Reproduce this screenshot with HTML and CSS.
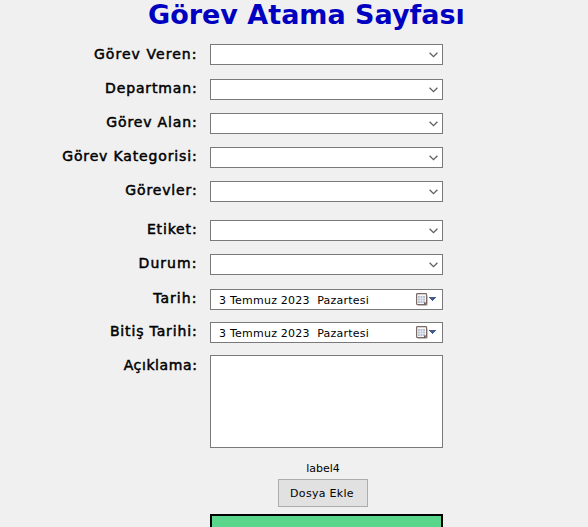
FILE: index.html
```html
<!DOCTYPE html>
<html lang="tr">
<head>
<meta charset="utf-8">
<title>Görev Atama Sayfası</title>
<link rel="stylesheet" href="styles.css">
</head>
<body>
<svg class="defs" width="0" height="0" aria-hidden="true">
  <symbol id="chevron" viewBox="0 0 9 6"><path d="M.6 .8 4.5 4.6 8.4 .8" fill="none" stroke="#606060" stroke-width="1.3"/></symbol>
  <symbol id="calendar" viewBox="0 0 22 14">
    <path d="M2 12.5h9.5V3" fill="none" stroke="#d8d8d8"/>
    <rect x=".6" y=".6" width="10" height="11" rx=".8" fill="#f4f8fb" stroke="#7a6965" stroke-width="1.2"/>
    <path d="M2 3h7v7H2z" fill="#b4bfcc"/>
    <path d="M2 5.3h7M2 7.6h7M4.3 3v7M6.7 3v7" stroke="#f0f5fa" stroke-width=".7"/>
    <path d="M8 12V9.5h3z" fill="#6c5956"/>
    <path d="M13 4h7v1h-1v1h-1v1h-1v1h-1V7h-1V6h-1V5h-1z" fill="#435a8d"/>
  </symbol>
</svg>
<main class="page">
  <h1 class="title"><span>Görev Atama Sayfası</span></h1>
  <form class="form">
    <div class="row row-first"><label class="label wide">Görev Veren:</label><div class="field"><svg class="chevron"><use href="#chevron"/></svg></div></div>
    <div class="row"><label class="label">Departman:</label><div class="field"><svg class="chevron"><use href="#chevron"/></svg></div></div>
    <div class="row"><label class="label">Görev Alan:</label><div class="field"><svg class="chevron"><use href="#chevron"/></svg></div></div>
    <div class="row"><label class="label">Görev Kategorisi:</label><div class="field"><svg class="chevron"><use href="#chevron"/></svg></div></div>
    <div class="row row-group-end"><label class="label">Görevler:</label><div class="field"><svg class="chevron"><use href="#chevron"/></svg></div></div>
    <div class="row"><label class="label">Etiket:</label><div class="field"><svg class="chevron"><use href="#chevron"/></svg></div></div>
    <div class="row row-status"><label class="label wide">Durum:</label><div class="field"><svg class="chevron"><use href="#chevron"/></svg></div></div>
    <div class="row row-date"><label class="label wide">Tarih:</label><div class="field"><span class="date">3 Temmuz 2023&nbsp; Pazartesi</span><svg class="calendar"><use href="#calendar"/></svg></div></div>
    <div class="row row-date"><label class="label">Bitiş Tarihi:</label><div class="field"><span class="date">3 Temmuz 2023&nbsp; Pazartesi</span><svg class="calendar"><use href="#calendar"/></svg></div></div>
    <div class="row row-note"><label class="label snug">Açıklama:</label><div class="field note"></div></div>
    <div class="attach">
      <span class="file-label">label4</span>
      <button class="file-button" type="button">Dosya Ekle</button>
    </div>
    <div class="submit"></div>
  </form>
</main>
</body>
</html>
```
FILE: styles.css
```css
* { box-sizing: border-box; }
html, body { margin: 0; height: 527px; overflow: hidden; background: #f0f0f0; }
body { font-family: "DejaVu Sans", sans-serif; color: #000; }
.defs { display: block; height: 0; }
.page { width: 588px; height: 527px; overflow: hidden; }
.title {
  margin: 0 0 0 148px;
  height: 44px;
  font-size: 27px;
  line-height: 29px;
  font-weight: 700;
  color: #0000c0;
  white-space: nowrap;
}
.row {
  display: grid;
  grid-template-columns: 197px 233px;
  column-gap: 13px;
  height: 21px;
  margin-bottom: 13px;
}
.row-first, .row-status { margin-bottom: 14px; }
.row-group-end { margin-bottom: 18px; }
.row-date { margin-bottom: 12px; }
.row-note { height: 93px; margin-bottom: 14px; }
.label {
  text-align: right;
  font-size: 14px;
  line-height: 18px;
  letter-spacing: .85px;
  margin-right: -.5px;
  -webkit-text-stroke: .5px #000;
  white-space: nowrap;
}
.snug { letter-spacing: .6px; }
.wide { letter-spacing: 1.05px; }
.row-first .label, .row-note .label { padding-top: 1px; }
.field {
  display: flex;
  align-items: center;
  height: 21px;
  background: #fff;
  border: 1px solid #7a7a7a;
}
.note { height: 93px; }
.chevron { width: 9px; height: 6px; margin: 1px 4px 0 auto; }
.date { padding: 2px 0 0 8px; font-size: 11px; line-height: 14px; letter-spacing: .23px; white-space: nowrap; }
.calendar { width: 22px; height: 14px; margin: 0 4px 0 auto; }
.attach {
  display: flex;
  flex-direction: column;
  align-items: center;
  width: 90px;
  margin-left: 278px;
}
.file-label { height: 17px; font-size: 11px; line-height: 14px; }
.file-button {
  width: 90px;
  height: 28px;
  padding: 2px 2px 0 0;
  border: 1px solid #adadad;
  background: #e1e1e1;
  font: 11px/14px "DejaVu Sans", sans-serif;
  letter-spacing: .3px;
  color: #000;
}
.submit {
  width: 233px;
  height: 40px;
  margin: 7px 0 0 210px;
  border: 2px solid #000;
  background: #5ad68c;
}
```
